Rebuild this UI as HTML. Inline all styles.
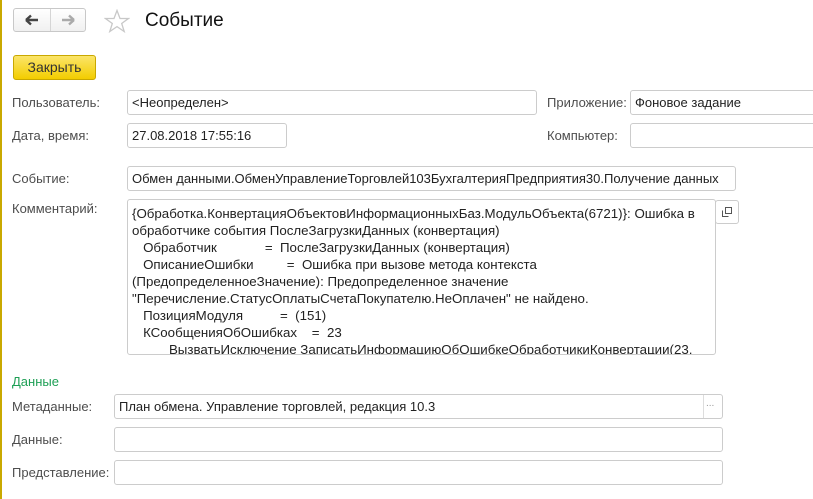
<!DOCTYPE html>
<html><head><meta charset="utf-8"><style>
body{margin:0;width:813px;height:499px;background:#fff;position:relative;overflow:hidden;font-family:"Liberation Sans",Arial,sans-serif;font-size:13px;color:#333}
.lb{position:absolute;color:#4d4d4d;font-size:13px}
.in{position:absolute;border:1px solid #ccc;border-radius:3px;background:#fff;box-sizing:border-box;height:25px;line-height:23px;padding-left:4px;color:#222;white-space:nowrap;overflow:hidden}
</style></head><body>
<div style="position:absolute;left:0;top:0;width:2px;height:499px;background:#c9a900"></div>
<div style="position:absolute;left:13px;top:8px;width:73px;height:24px;border:1px solid #c8c8c8;border-radius:3px;box-sizing:border-box;background:linear-gradient(#fff,#f0f0f0)"></div>
<div style="position:absolute;left:50px;top:9px;width:1px;height:22px;background:#d5d5d5"></div>
<svg style="position:absolute;left:24px;top:14px" width="16" height="12"><path d="M2 6H14M2 6L7 1.5M2 6L7 10.5" stroke="#444" stroke-width="2.4" fill="none"/></svg>
<svg style="position:absolute;left:60px;top:14px" width="16" height="12"><path d="M14 6H2M14 6L9 1.5M14 6L9 10.5" stroke="#aaa" stroke-width="2.4" fill="none"/></svg>
<svg style="position:absolute;left:104px;top:9px" width="26" height="24"><path d="M13 1.5L16 9.5H24.5L17.7 14.5L20.2 22.5L13 17.6L5.8 22.5L8.3 14.5L1.5 9.5H10Z" fill="none" stroke="#c8c8c8" stroke-width="1.3"/></svg>
<div style="position:absolute;left:145px;top:10px;font-size:19px;color:#111">Событие</div>
<div style="position:absolute;left:13px;top:55px;width:83px;height:25px;border:1px solid #c9a800;border-radius:3px;box-sizing:border-box;background:linear-gradient(#fbe56a,#f3cd00);text-align:center;line-height:23px;font-size:14px;color:#333">Закрыть</div>

<div class="lb" style="left:12px;top:95px">Пользователь:</div>
<div class="in" style="left:127px;top:90px;width:410px">&lt;Неопределен&gt;</div>
<div class="lb" style="left:547px;top:95px">Приложение:</div>
<div class="in" style="left:630px;top:90px;width:190px">Фоновое задание</div>

<div class="lb" style="left:12px;top:128px">Дата, время:</div>
<div class="in" style="left:127px;top:123px;width:160px">27.08.2018 17:55:16</div>
<div class="lb" style="left:547px;top:128px">Компьютер:</div>
<div class="in" style="left:630px;top:123px;width:190px"></div>

<div class="lb" style="left:12px;top:171px">Событие:</div>
<div class="in" style="left:127px;top:166px;width:609px">Обмен данными.ОбменУправлениеТорговлей103БухгалтерияПредприятия30.Получение данных</div>

<div class="lb" style="left:12px;top:201px">Комментарий:</div>
<div style="position:absolute;left:127px;top:199px;width:589px;height:156px;border:1px solid #ccc;border-radius:3px;box-sizing:border-box;overflow:hidden;padding:5px 0 0 4px;line-height:17px;white-space:pre;color:#222;font-size:13.3px">{Обработка.КонвертацияОбъектовИнформационныхБаз.МодульОбъекта(6721)}: Ошибка в
обработчике события ПослеЗагрузкиДанных (конвертация)
   Обработчик             =  ПослеЗагрузкиДанных (конвертация)
   ОписаниеОшибки         =  Ошибка при вызове метода контекста
(ПредопределенноеЗначение): Предопределенное значение
"Перечисление.СтатусОплатыСчетаПокупателю.НеОплачен" не найдено.
   ПозицияМодуля          =  (151)
   КСообщенияОбОшибках    =  23
          ВызватьИсключение ЗаписатьИнформациюОбОшибкеОбработчикиКонвертации(23,
          ВызватьИсключение ЗаписатьИнформацию</div>
<div style="position:absolute;left:715px;top:200px;width:24px;height:24px;border:1px solid #ccc;border-radius:3px;box-sizing:border-box;background:#fff"></div>
<svg style="position:absolute;left:722px;top:207px" width="10" height="10"><rect x="3.5" y="0.5" width="6" height="6" fill="none" stroke="#555"/><path d="M0.5 3.5V9.5H6.5" fill="none" stroke="#555"/></svg>

<div style="position:absolute;left:12px;top:374px;color:#1e9f55;font-size:13px">Данные</div>
<div class="lb" style="left:12px;top:399px">Метаданные:</div>
<div class="in" style="left:114px;top:394px;width:609px">План обмена. Управление торговлей, редакция 10.3</div>
<div style="position:absolute;left:703px;top:395px;width:1px;height:23px;background:#ddd"></div>
<div style="position:absolute;left:706px;top:398px;color:#999;font-size:10px">...</div>
<div class="lb" style="left:12px;top:432px">Данные:</div>
<div class="in" style="left:114px;top:427px;width:609px"></div>
<div class="lb" style="left:12px;top:465px">Представление:</div>
<div class="in" style="left:114px;top:460px;width:609px"></div>
</body></html>
